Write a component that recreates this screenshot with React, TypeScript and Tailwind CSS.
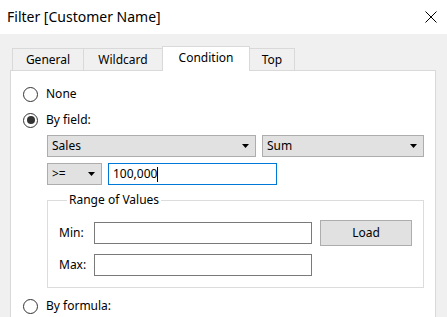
import React from "react";

const font = { fontFamily: '"Noto Sans", "Open Sans", sans-serif' };

function Radio({ checked, label }: { checked?: boolean; label: string }) {
  return (
    <div className="flex items-center h-[16px]">
      <span className="w-[15px] h-[15px] rounded-full border border-[#333333] bg-white flex items-center justify-center">
        {checked && <span className="w-[8px] h-[8px] rounded-full bg-[#333333]" />}
      </span>
      <span className="ml-[8px] text-[12px] leading-[16px] text-black">{label}</span>
    </div>
  );
}

function Arrow() {
  return (
    <svg width="7" height="4" viewBox="0 0 7 4" className="shrink-0">
      <path d="M0 0 H7 L3.5 4 Z" fill="#000" />
    </svg>
  );
}

function Dropdown({ label, width }: { label: string; width: string }) {
  return (
    <div className={`${width} h-[22px] flex items-center justify-between bg-[#e1e1e1] border border-[#adadad] pl-[4px] pr-[6px]`}>
      <span className="text-[12px] leading-[16px] text-black">{label}</span>
      <Arrow />
    </div>
  );
}

export default function App() {
  return (
    <div style={font} className="w-[447px] h-[317px] overflow-hidden bg-[#f0f0f0] flex flex-col">
      {/* title bar */}
      <div className="h-[34px] bg-white flex items-center justify-between pl-[7px] pr-[10px] shrink-0">
        <span className="text-[14px] leading-[20px] text-black">Filter [Customer Name]</span>
        <svg width="12" height="12" viewBox="0 0 12 12">
          <path d="M0.5 0.5 L11.5 11.5 M11.5 0.5 L0.5 11.5" stroke="#000" strokeWidth="1" />
        </svg>
      </div>

      <div className="pl-[10px] pt-[13px]">
        {/* tabs */}
        <div className="flex items-end pl-[2px] h-[23px]">
          <div className="w-[72px] h-[22px] border border-b-0 border-[#d9d9d9] bg-[#f0f0f0] flex items-center justify-center text-[12px] text-black">General</div>
          <div className="-ml-px w-[80px] h-[22px] border border-b-0 border-[#d9d9d9] bg-[#f0f0f0] flex items-center justify-center text-[12px] text-black">Wildcard</div>
          <div className="-ml-px relative z-10 -mb-px w-[88px] h-[25px] border border-b-0 border-[#d9d9d9] bg-white flex items-center justify-center pb-[3px] text-[12px] text-black">Condition</div>
          <div className="-ml-px w-[46px] h-[22px] border border-b-0 border-[#d9d9d9] bg-[#f0f0f0] flex items-center justify-center text-[12px] text-black">Top</div>
        </div>

        {/* panel */}
        <div className="w-[426px] h-[260px] bg-white border border-[#d9d9d9] pl-[12px]">
          <div className="mt-[15px]">
            <Radio label="None" />
          </div>
          <div className="mt-[10px]">
            <Radio checked label="By field:" />
          </div>

          <div className="ml-[24px]">
            <div className="mt-[7px] flex gap-[6px]">
              <Dropdown label="Sales" width="w-[209px]" />
              <Dropdown label="Sum" width="w-[162px]" />
            </div>
            <div className="mt-[6px] flex gap-[6px]">
              <Dropdown label=">=" width="w-[55px]" />
              <div className="w-[169px] h-[22px] border border-[#0078d7] bg-white flex items-center pl-[4px]">
                <span className="text-[12px] leading-[16px] text-black">100,000</span>
                <span className="w-px h-[15px] bg-black" />
              </div>
            </div>

            <fieldset className="mt-[7px] w-[377px] border border-[#dcdcdc] pl-[11px] pb-[11px]">
              <legend className="ml-[8px] px-[2px] text-[12px] leading-[16px] text-black">Range of Values</legend>
              <div className="mt-[12px] flex items-center">
                <span className="w-[35px] text-[12px] leading-[16px] text-black">Min:</span>
                <div className="w-[218px] h-[22px] border border-[#7a7a7a] bg-white" />
                <div className="ml-[8px] w-[92px] h-[26px] bg-[#e1e1e1] border border-[#adadad] flex items-center justify-center text-[12px] text-black">Load</div>
              </div>
              <div className="mt-[8px] flex items-center">
                <span className="w-[35px] text-[12px] leading-[16px] text-black">Max:</span>
                <div className="w-[218px] h-[22px] border border-[#7a7a7a] bg-white" />
              </div>
            </fieldset>
          </div>

          <div className="mt-[10px]">
            <Radio label="By formula:" />
          </div>
        </div>
      </div>
    </div>
  );
}
